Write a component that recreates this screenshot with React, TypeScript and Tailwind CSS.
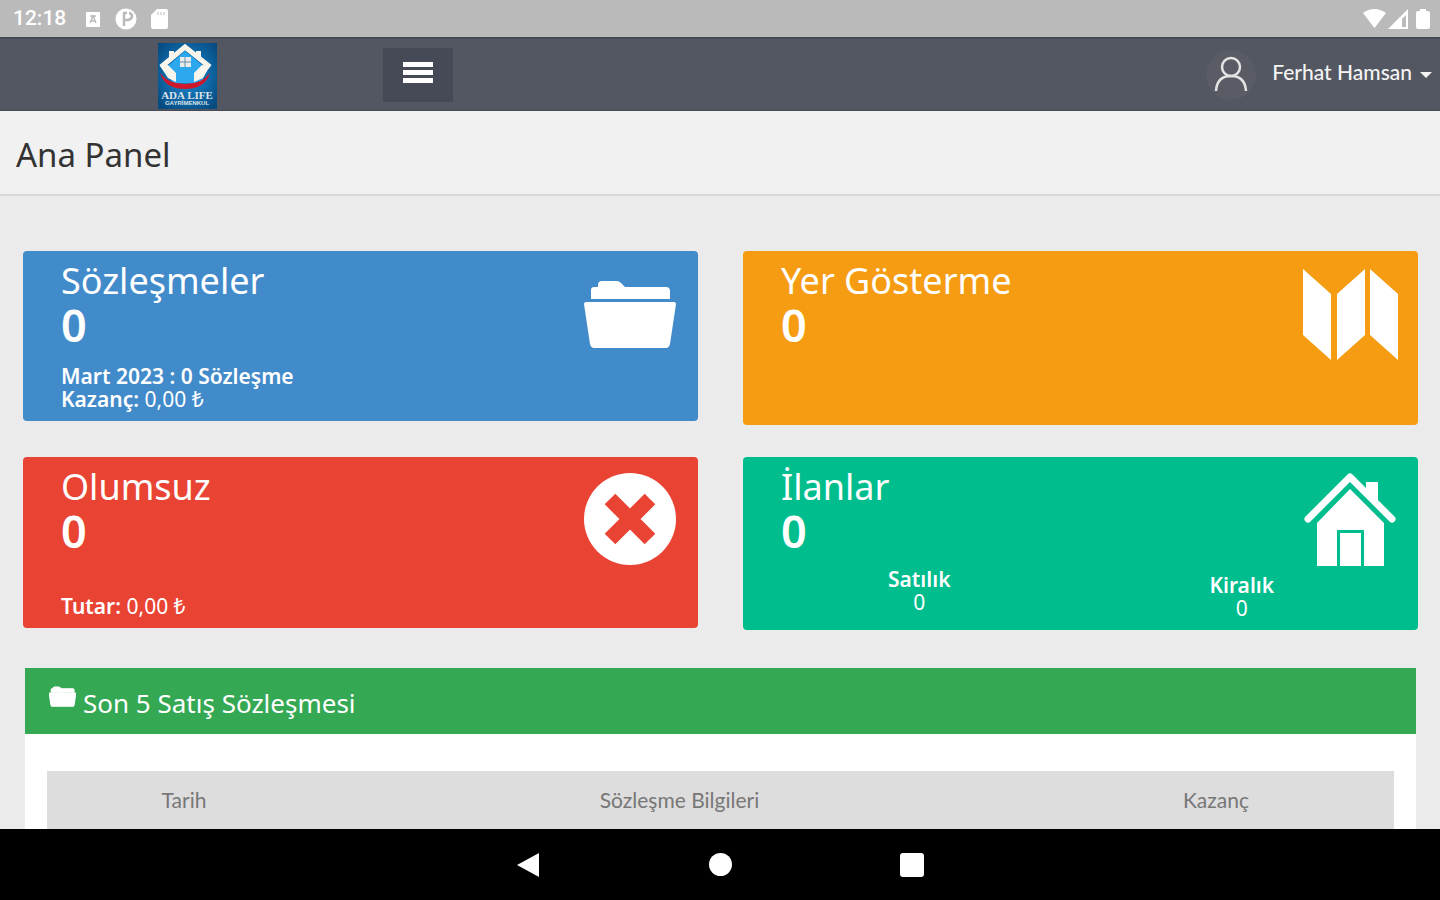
import type { ReactNode } from 'react';

function FolderIcon({ className }: { className: string }) {
  return (
    <svg className={className} viewBox="0 0 94 94" fill="currentColor" aria-hidden="true">
      <path d="M8 32V23q0-3 3-3h4v-2q0-4 4-4h15q2 0 4 2l4 4h41q4 0 4 4v8z" />
      <path d="M3 35h88q2 0 2 2l-6 40q-1 4-4 4H11q-3 0-4-4L1 37q0-2 2-2z" />
    </svg>
  );
}

function MapIcon({ className }: { className: string }) {
  return (
    <svg className={className} viewBox="0 0 94 94" fill="currentColor" aria-hidden="true">
      <path d="M0 2l28 25v66L0 68zM34 27L62 2v66L34 93zM67 2l28 25v66L67 68z" />
    </svg>
  );
}

function CancelIcon({ className }: { className: string }) {
  return (
    <svg className={className} viewBox="0 0 94 94" aria-hidden="true">
      <circle cx="47" cy="46" r="46" fill="currentColor" />
      <path d="M27 26l40 40M67 26L27 66" stroke="#e94334" strokeWidth="15" />
    </svg>
  );
}

function HouseIcon({ className }: { className: string }) {
  return (
    <svg className={className} viewBox="0 0 94 94" fill="currentColor" aria-hidden="true">
      <path d="M5 46L47 4l42 42" fill="none" stroke="currentColor" strokeWidth="7" strokeLinecap="round" strokeLinejoin="round" />
      <path d="M63 9h12v24L63 21z" />
      <path d="M47 16l34 34v43H61V57H34v36H14V50z" />
      <path d="M37 60h21v33H37z" />
    </svg>
  );
}

function Logo() {
  return (
    <svg className="h-[66px] w-[59px]" viewBox="0 0 59 66" role="img" aria-label="Ada Life">
      <defs>
        <radialGradient id="logoSky" cx="50%" cy="48%" r="65%">
          <stop offset="0" stopColor="#1c8fd8" />
          <stop offset="1" stopColor="#064a80" />
        </radialGradient>
      </defs>
      <rect width="59" height="66" fill="url(#logoSky)" />
      <path d="M10 23L27 8l18 15v17H14z" fill="#2ba8ee" />
      <path d="M3 24L27 4l25 20" fill="none" stroke="#f8f5ec" strokeWidth="5" />
      <path d="M11 8h5v6l-5 4zM38 8h5v10l-5-4z" fill="#f8f5ec" />
      <path d="M2 23l8-1 8 8v9l-8-4zM52 23l-8-1-8 8v9l9-4z" fill="#f8f5ec" />
      <path d="M22 14h11v10H22z" fill="#e9ecec" />
      <path d="M27 14v10M22 19h11" stroke="#668da8" strokeWidth="1" />
      <path d="M2 30q8 11 25 11t25-11q-5 16-25 16T2 30z" fill="#cf182c" />
      <text x="29" y="56" textAnchor="middle" fontSize="11" fontWeight="700" fill="#dbe3e8" className="font-['Liberation_Serif',serif]">ADA LIFE</text>
      <text x="29" y="62" textAnchor="middle" fontSize="6" fontWeight="700" fill="#dbe3e8" className="font-['Liberation_Sans',sans-serif]">GAYRİMENKUL</text>
    </svg>
  );
}

interface StatCardProps {
  title: string;
  count: number;
  className: string;
  icon: ReactNode;
  children?: ReactNode;
}

function StatCard({ title, count, className, icon, children }: StatCardProps) {
  return (
    <section className={`flex flex-col rounded-[4px] pb-2.5 text-white ${className}`}>
      <div className="flex items-start justify-between pr-[21px] pl-[38px]">
        <div className="pt-2">
          <h2 className="text-[36px] leading-[44px]">{title}</h2>
          <p className="text-[45px] leading-[44px] font-semibold">{count}</p>
        </div>
        <div className="pt-4">{icon}</div>
      </div>
      <div className="mt-auto text-[21px] leading-[23px]">{children}</div>
    </section>
  );
}

function StatusBar() {
  return (
    <div className="flex h-[37px] shrink-0 items-center justify-between bg-[#bababa] pr-2.5 pl-[13px] text-white">
      <div className="flex items-center">
        <span className="w-[54px] font-[Roboto,sans-serif] text-[21px] font-medium">12:18</span>
        <svg className="ml-[18px] size-4" viewBox="0 0 16 16" aria-hidden="true">
          <rect x="1" y="1" width="14" height="15" rx="1" fill="currentColor" />
          <path d="M5 12l3-7 3 7M6 10h4M5 5h6" fill="none" stroke="#bababa" strokeWidth="1.5" />
        </svg>
        <svg className="ml-3.5 size-[22px]" viewBox="0 0 22 22" aria-hidden="true">
          <circle cx="11" cy="11" r="10.5" fill="currentColor" />
          <path d="M9 4v14M9 5h4q4 0 4 3t-4 4H9" fill="none" stroke="#bababa" strokeWidth="2.5" />
          <path d="M13 3v6" stroke="#fff" strokeWidth="2" />
        </svg>
        <svg className="ml-3.5 h-5 w-[17px]" viewBox="0 0 17 20" aria-hidden="true">
          <path d="M6 0h9q2 0 2 2v16q0 2-2 2H2q-2 0-2-2V6z" fill="currentColor" />
          <path d="M7 3v3M10 3v3M13 3v3" stroke="#bababa" strokeWidth="1" />
        </svg>
      </div>
      <div className="flex items-center">
        <svg className="h-[19px] w-[23px]" viewBox="0 0 23 19" fill="currentColor" aria-hidden="true">
          <path d="M0 4q11-8 23 0L11.500 19z" />
        </svg>
        <svg className="ml-0.5 size-5" viewBox="0 0 20 20" aria-hidden="true">
          <path d="M0 20L20 0v20z" fill="currentColor" />
          <path d="M14 10l4-4v12h-4z" fill="#bababa" />
        </svg>
        <svg className="ml-2 h-5 w-[14px]" viewBox="0 0 14 20" fill="currentColor" aria-hidden="true">
          <path d="M4 0h6v2h2q2 0 2 2v14q0 2-2 2H2q-2 0-2-2V4q0-2 2-2h2z" />
        </svg>
      </div>
    </div>
  );
}

function App() {
  return (
    <div className="flex h-screen flex-col overflow-hidden bg-[#ebebeb] font-['Noto_Sans',sans-serif]">
      <StatusBar />

      {/* Header */}
      <header className="flex h-[74px] shrink-0 items-center justify-between border-t-2 border-b border-[#454955] bg-[#535762] pr-2 pl-[158px]">
        <div className="flex items-center gap-[166px]">
          <a href="#home" className="block pt-0.5">
            <Logo />
          </a>
          <button type="button" aria-label="Menü" className="flex h-[54px] w-[70px] flex-col items-center justify-center gap-[3px] bg-[#464a56] pb-1">
            <span className="h-[5px] w-[30px] bg-white" />
            <span className="h-[5px] w-[30px] bg-white" />
            <span className="h-[5px] w-[30px] bg-white" />
          </button>
        </div>
        <button type="button" className="flex items-center font-[Lato,sans-serif] text-[21px] font-medium text-[#f4f4f4]">
          <svg className="size-[50px]" viewBox="0 0 50 50" aria-hidden="true">
            <circle cx="25" cy="25" r="25" fill="#595c64" />
            <circle cx="25" cy="17" r="9" fill="none" stroke="#e4e4e4" strokeWidth="2.500" />
            <path d="M10 41q1-15 15-15t15 15" fill="none" stroke="#e4e4e4" strokeWidth="2.500" />
          </svg>
          <span className="ml-4 pb-1.5">Ferhat Hamsan</span>
          <svg className="ml-2 h-1.5 w-3" viewBox="0 0 12 6" fill="currentColor" aria-hidden="true">
            <path d="M0 0h12L6 6z" />
          </svg>
        </button>
      </header>

      <div className="flex h-[85px] shrink-0 items-center border-b-2 border-[#d8d8d8] bg-[#f1f1f1] px-4 pt-1">
        <h1 className="text-[33px] text-[#333]">Ana Panel</h1>
      </div>

      {/* Dashboard */}
      <main className="min-h-0 flex-1 overflow-hidden pt-[55px]">
        <div className="grid grid-cols-2 items-start gap-x-[45px] gap-y-8 pr-[22px] pl-[23px]">
          <StatCard title="Sözleşmeler" count={0} className="min-h-[170px] bg-[#428bca]" icon={<FolderIcon className="size-[94px]" />}>
            <div className="px-[38px]">
              <p className="font-semibold">Mart 2023 : 0 Sözleşme</p>
              <p><span className="font-semibold">Kazanç:</span> 0,00 ₺</p>
            </div>
          </StatCard>
          <StatCard title="Yer Gösterme" count={0} className="min-h-[174px] bg-[#f59c13]" icon={<MapIcon className="size-[94px] overflow-visible" />} />
          <StatCard title="Olumsuz" count={0} className="min-h-[171px] bg-[#e94334]" icon={<CancelIcon className="size-[94px]" />}>
            <p className="px-[38px]"><span className="font-semibold">Tutar:</span> 0,00 ₺</p>
          </StatCard>
          <StatCard title="İlanlar" count={0} className="min-h-[173px] bg-[#00bd8d]" icon={<HouseIcon className="size-[94px]" />}>
            <div className="grid grid-cols-2 px-[15px] text-center">
              <div>
                <p className="font-semibold">Satılık</p>
                <p>0</p>
              </div>
              <div className="pt-1.5">
                <p className="font-semibold">Kiralık</p>
                <p>0</p>
              </div>
            </div>
          </StatCard>
        </div>

        <section className="mt-[38px] mr-6 ml-[25px] bg-white">
          <div className="flex h-[66px] items-center bg-[#34a853] px-6 text-white">
            <FolderIcon className="mb-2.5 size-[27px] stroke-current stroke-4" />
            <h2 className="ml-[7px] pt-1 text-[26px]">Son 5 Satış Sözleşmesi</h2>
          </div>
          <div className="px-[22px] pt-[37px]">
            <table className="w-full table-fixed">
              <thead className="bg-[#ddd] font-[Lato,sans-serif] text-[21px] text-[#777]">
                <tr className="h-[58px]">
                  <th scope="col" className="w-[274px] font-normal">Tarih</th>
                  <th scope="col" className="font-normal">Sözleşme Bilgileri</th>
                  <th scope="col" className="w-[356px] font-normal">Kazanç</th>
                </tr>
              </thead>
            </table>
          </div>
        </section>
      </main>

      {/* System navigation */}
      <nav aria-label="Sistem" className="flex h-[71px] shrink-0 items-center justify-center gap-[168px] bg-black text-white">
        <button type="button" aria-label="Geri">
          <svg className="size-6" viewBox="0 0 24 24" fill="currentColor" aria-hidden="true">
            <path d="M0 12L22 0v24z" />
          </svg>
        </button>
        <button type="button" aria-label="Ana ekran" className="size-[23px] rounded-full bg-white" />
        <button type="button" aria-label="Son uygulamalar" className="size-6 rounded-[3px] bg-white" />
      </nav>
    </div>
  );
}

export default App;
